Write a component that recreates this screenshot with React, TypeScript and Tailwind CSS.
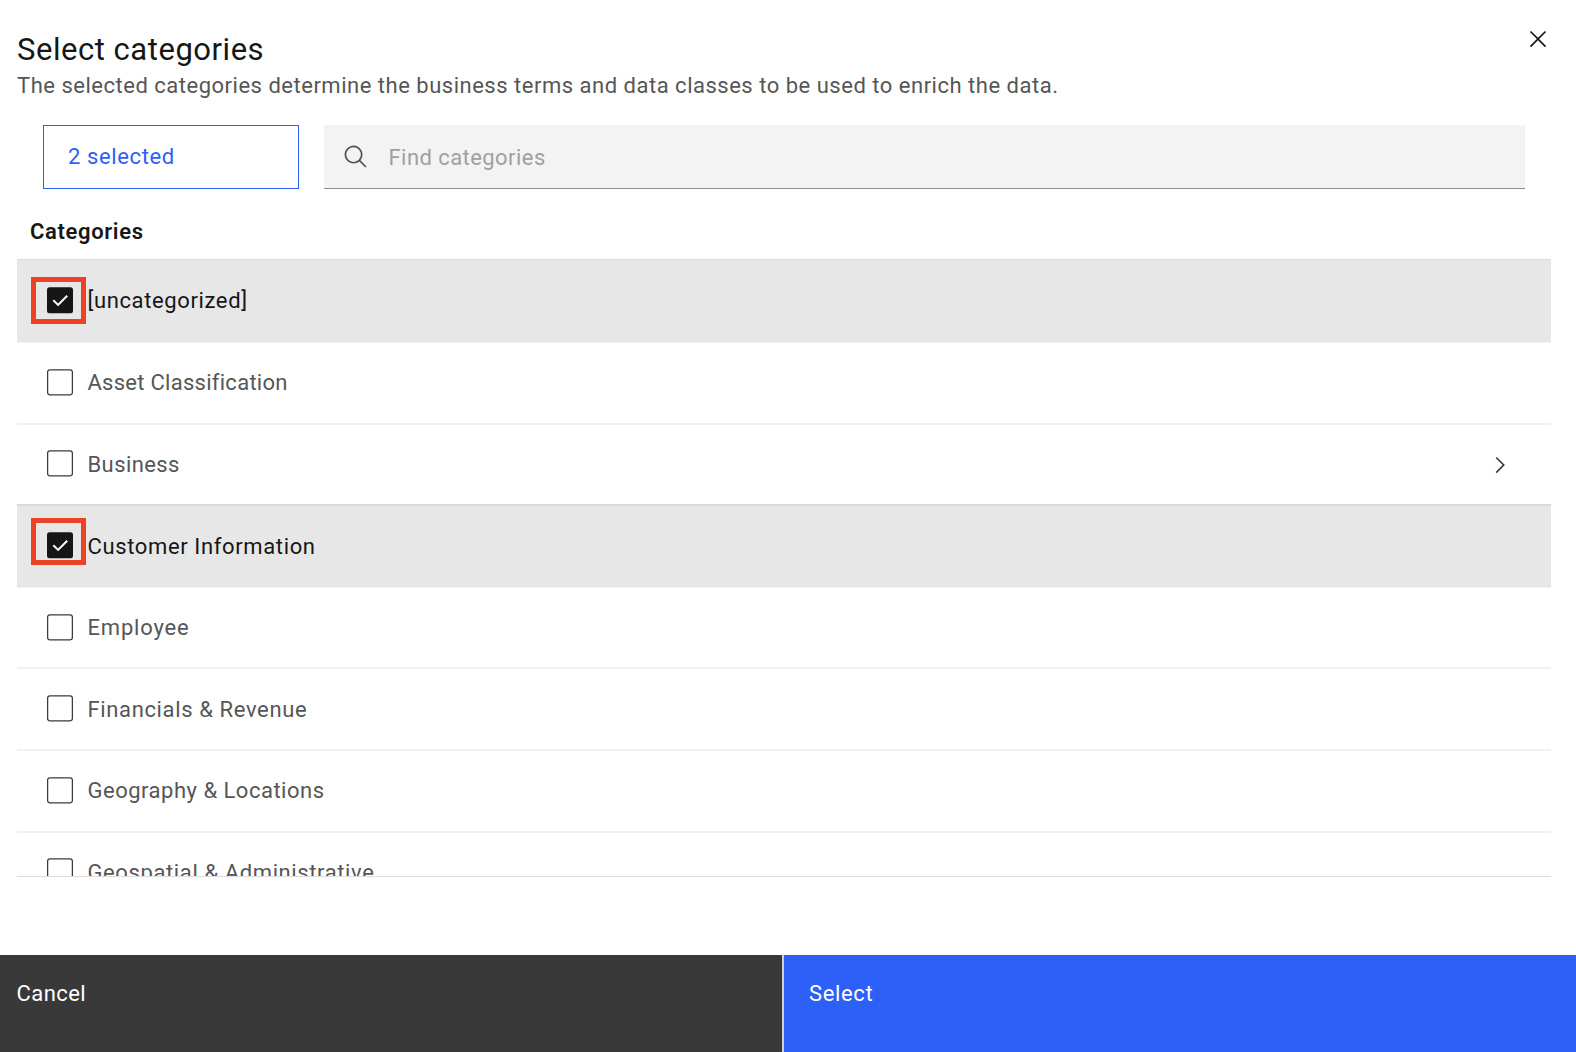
import React from "react";

const rows = [
  { name: "[uncategorized]", checked: true, spacing: "tracking-[0.62px]" },
  { name: "Asset Classification", spacing: "tracking-[0.27px]" },
  { name: "Business", spacing: "tracking-[0.4px]", nested: true },
  { name: "Customer Information", checked: true, spacing: "tracking-[0.63px]" },
  { name: "Employee", spacing: "tracking-[0.8px]" },
  { name: "Financials & Revenue", spacing: "tracking-[0.63px]" },
  { name: "Geography & Locations", spacing: "tracking-[0.5px]" },
  { name: "Geospatial & Administrative", spacing: "tracking-[0.61px]" },
];

function Checkbox({ checked }: { checked?: boolean }) {
  return (
    <svg width="26" height="27" viewBox="0 0 26 27" className="block shrink-0">
      {checked ? (
        <>
          <rect x="0" y="0.3" width="26" height="26" rx="2.5" fill="#161616" />
          <path d="M6.3 13.2 L11.1 17.9 L20.2 8.7" fill="none" stroke="#fff" strokeWidth="2" />
        </>
      ) : (
        <rect x="0.6" y="0.9" width="24.8" height="24.9" rx="2.2" fill="none" stroke="#3a3a3a" strokeWidth="1.3" />
      )}
    </svg>
  );
}

function rowFrame(i: number) {
  if (i === 0) return "h-[83.3px] border-b border-[#f1f1f1] pb-[1.8px]";
  if (rows[i].checked) return "h-[81.55px] border-b border-[#f1f1f1] pb-[2.3px]";
  if (rows[i + 1]?.checked) return "h-[81.55px] border-b-2 border-[#d9d9d9] pb-[1.3px]";
  return "h-[81.55px] border-b-2 border-[#f1f1f1] pb-[1.3px]";
}

export default function App() {
  return (
    <div className="flex h-[1052px] w-[1576px] flex-col overflow-hidden bg-white font-[Roboto,sans-serif] text-[22px] leading-7 text-[#565656]">
      <header className="flex h-[125px] justify-between pl-[17px] pr-[25px]">
        <div className="pt-[30px]">
          <h1 className="h-[42px] whitespace-nowrap text-[31px] leading-10 tracking-[0.53px] text-[#161616]">Select categories</h1>
          <p className="whitespace-nowrap tracking-[0.51px]">The selected categories determine the business terms and data classes to be used to enrich the data.</p>
        </div>
        <svg width="26" height="26" viewBox="0 0 32 32" fill="#161616" className="mt-[26px]">
          <path d="M17.4141 16 26 7.4141 24.5859 6 16 14.5859 7.4143 6 6 7.4141 14.5859 16 6 24.5859 7.4143 26 16 17.4141 24.5859 26 26 24.5859z" />
        </svg>
      </header>

      <div className="flex h-16 gap-[25px] pl-[43px] pr-[51px]">
        <button className="flex w-64 items-center whitespace-nowrap border border-[#2d60f6] pl-6 text-left tracking-[0.62px] text-[#2d60f6]">2 selected</button>
        <div className="flex flex-1 items-center gap-[19.5px] border-b border-[#8d8d8d] bg-[#f3f3f3] pl-[19px]">
          <svg width="26" height="26" viewBox="0 0 32 32" fill="#525252">
            <path d="M29,27.5859l-7.5521-7.5521a11.0177,11.0177,0,1,0-1.4141,1.4141L27.5859,29ZM4,13a9,9,0,1,1,9,9A9.01,9.01,0,0,1,4,13Z" />
          </svg>
          <span className="pt-0.5 tracking-[0.44px] text-[#a0a0a0]">Find categories</span>
        </div>
      </div>

      <h2 className="h-[70px] pl-[30px] pt-[29px] font-semibold tracking-[0.65px] text-[#161616]">Categories</h2>

      <div className="ml-[17px] h-[618px] w-[1534px] overflow-hidden border-y border-[#dedede]">
        {rows.map((row, i) => (
          <div
            key={row.name}
            className={`relative flex items-center pl-[30px] ${rowFrame(i)} ${row.checked ? "bg-[#e7e7e7] text-[#161616]" : ""}`}
          >
            <Checkbox checked={row.checked} />
            <span className={`whitespace-nowrap pl-[14.5px] ${i === 0 ? "pt-px" : "pt-0.5"} ${row.spacing}`}>{row.name}</span>
            {row.nested && (
              <svg width="26" height="26" viewBox="0 0 32 32" fill="#393939" className="ml-auto mr-[38px] mt-0.5">
                <path d="M22 16 12 26 10.6 24.6 19.2 16 10.6 7.4 12 6z" />
              </svg>
            )}
            {row.checked && (
              <span className={`absolute left-[14px] h-[47px] w-[55px] border-[5px] border-[#ec4226] ${i === 0 ? "top-[17px]" : "top-[11.4px]"}`} />
            )}
          </div>
        ))}
      </div>

      <footer className="mt-auto flex h-[97px] text-white">
        <button className="flex w-[782px] items-start bg-[#393939] pl-[16.5px] pt-[25px] tracking-[0.42px]">Cancel</button>
        <button className="flex flex-1 items-start border-l-2 border-[#d0d0d0] bg-[#2d60f6] pl-[25px] pt-[25px] tracking-[0.65px]">Select</button>
      </footer>
    </div>
  );
}
